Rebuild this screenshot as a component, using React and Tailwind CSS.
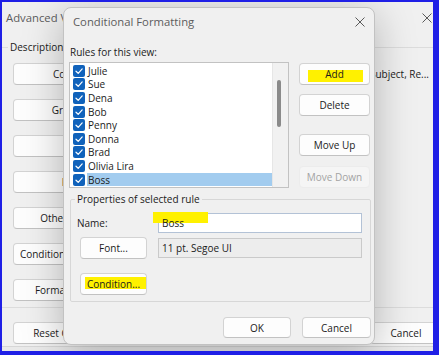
import React from 'react';

const rules = ['Julie', 'Sue', 'Dena', 'Bob', 'Penny', 'Donna', 'Brad', 'Olivia Lira', 'Boss'];

// only the first description reaches past the dialog; the others sit under it
const viewRows = [
  { label: 'Columns...', desc: 'From, Subject, Re...' },
  { label: 'Group By...' },
  { label: 'Sort...' },
  { label: 'Filter...' },
  { label: 'Other Settings...' },
  { label: 'Conditional Formatting...' },
  { label: 'Format Columns...' },
];

function CloseIcon() {
  return (
    <svg width="10" height="10" viewBox="0 0 10 10" className="shrink-0">
      <path d="M0.5 0.5 L9.5 9.5 M9.5 0.5 L0.5 9.5" stroke="#5a5a5a" strokeWidth="1" fill="none" />
    </svg>
  );
}

function Btn({ children, className = '', disabled }) {
  return (
    <div
      className={`relative flex items-center justify-center rounded-[4px] text-[10px] leading-[14px] whitespace-nowrap overflow-hidden ${
        disabled
          ? 'bg-[#f5f5f5] text-[#a3a3a3] border border-[#ececec]'
          : 'bg-[#fdfdfd] text-[#1b1b1b] border border-[#d3d3d3] border-b-[#c2c2c2]'
      } ${className}`}
    >
      {children}
    </div>
  );
}

function Check() {
  return (
    <div className="w-[12px] h-[12px] rounded-[2px] bg-[#1062bb] flex items-center justify-center shrink-0">
      <svg width="10" height="10" viewBox="0 0 10 10">
        <path d="M2 5.2 L4.2 7.3 L8.2 2.9" stroke="white" strokeWidth="1.2" fill="none" strokeLinecap="round" strokeLinejoin="round" />
      </svg>
    </div>
  );
}

function Marker({ className }) {
  return <span className={`absolute bg-[#fff100] ${className}`} />;
}

export default function App() {
  return (
    <div className="w-[439px] h-[355px] bg-[#1f1fe6] pt-[2px] pl-[2px] pr-[6px] pb-[4px] font-['Segoe_UI','Open_Sans',sans-serif] text-[#1b1b1b]">
      <div className="relative w-[431px] h-[349px] overflow-hidden bg-[#e9e9e9]">
        {/* window behind */}
        <div className="h-[345px] bg-[#f0f0f0] border-b border-[#d6d6d6] flex flex-col">
          <div className="flex justify-between items-start h-[38px] pt-[9px] pl-[4px] pr-[1px]">
            <span className="text-[11.3px] leading-[14px] text-[#5c5c5c]">Advanced View Settings: Compact</span>
            <div className="mt-[2px]"><CloseIcon /></div>
          </div>
          <fieldset className="min-w-0 border-t border-b border-[#dcdcdc]">
            <legend className="ml-[6px] px-[2px] text-[10px] leading-[14px]">Description</legend>
            <div className="flex flex-col gap-[14px] pt-[9px] pb-[6px]">
              {viewRows.map((r) => (
                <div key={r.label} className="flex items-center h-[22px]">
                  <Btn className="ml-[11px] w-[129px] h-[22px] shrink-0">{r.label}</Btn>
                  {r.desc && (
                    <div className="flex-1 min-w-0 ml-[9px] mr-[4px] whitespace-nowrap text-[10px] leading-[14px] flex justify-end">
                      <span>{r.desc}</span>
                    </div>
                  )}
                </div>
              ))}
            </div>
          </fieldset>
          <div className="flex items-center h-[22px] mt-[14px]">
            <Btn className="ml-[11px] w-[129px] h-[22px]">Reset Current View</Btn>
            <Btn className="ml-auto -mr-[9px] w-[72px] h-[22px]">Cancel</Btn>
          </div>
        </div>

        {/* Conditional Formatting dialog */}
        <div className="absolute left-[61px] top-[5px] w-[312px] h-[338px] rounded-[8px] border border-[#c2c2c2] bg-[#f0f0f0] shadow-[0_8px_40px_rgba(0,0,0,0.26)] flex flex-col">
          <div className="flex items-center justify-between h-[28px] pl-[9px] pr-[9px]">
            <span className="text-[11.3px] leading-[14px] text-[#5c5c5c]">Conditional Formatting</span>
            <CloseIcon />
          </div>
          <div className="flex flex-col pl-[5px] pr-[3px] text-[10px] leading-[14px]">
            <div className="pl-[1px] mt-[9px]">Rules for this view:</div>
            <div className="flex mt-[3px]">
              <div className="w-[220px] h-[126px] border border-[#c2c2c2] bg-white flex">
                <div className="flex-1 pt-[1px] pl-[3px]">
                  {rules.map((name) => (
                    <div key={name} className="h-[13.6px] flex items-center">
                      <Check />
                      <span className={`flex-1 h-full ml-[2px] pl-[1px] flex items-center ${name === 'Boss' ? 'bg-[#a2ccef]' : ''}`}>
                        {name}
                      </span>
                    </div>
                  ))}
                </div>
                <div className="w-[16px] bg-[#f1f1f1] border-l border-[#e6e6e6] pt-[17px] pl-[4px]">
                  <div className="w-[4px] h-[47px] rounded-full bg-[#8a8a8a]" />
                </div>
              </div>
              <div className="ml-[10px] w-[71px] flex flex-col">
                <Btn className="mt-[1px] h-[22px]">
                  <Marker className="left-[8px] top-[6px] w-[55px] h-[12px]" />
                  <span className="relative">Add</span>
                </Btn>
                <Btn className="mt-[9px] h-[22px]">Delete</Btn>
                <Btn className="mt-[18px] h-[22px]">Move Up</Btn>
                <Btn disabled className="mt-[10px] h-[22px]">Move Down</Btn>
              </div>
            </div>

            <fieldset className="min-w-0 ml-[1px] mt-[4px] w-[301px] border border-[#d7d7d7] rounded-[2px]">
              <legend className="ml-[4px] px-[2px] leading-[14px]">Properties of selected rule</legend>
              <div className="flex flex-col pt-[7px] pb-[6px]">
                <div className="flex items-center h-[20px]">
                  <span className="w-[87px] pl-[6px]">Name:</span>
                  <div className="relative w-[204px] h-[20px] bg-white border border-[#b3c2d6] flex items-center pl-[3px]">
                    <Marker className="-left-[6px] -top-[2px] w-[55px] h-[11px]" />
                    <span className="relative">Boss</span>
                  </div>
                </div>
                <div className="flex items-center h-[22px] mt-[4px]">
                  <Btn className="ml-[9px] w-[67px] h-[22px]">Font...</Btn>
                  <div className="ml-[11px] w-[204px] h-[20px] bg-[#ededed] border border-[#cacaca] flex items-center pl-[3px]">
                    11 pt. Segoe UI
                  </div>
                </div>
                <div className="flex items-center h-[22px] mt-[14px]">
                  <Btn className="ml-[9px] w-[67px] h-[22px]">
                    <Marker className="left-[4px] top-[3px] w-[63px] h-[12px]" />
                    <span className="relative">Condition...</span>
                  </Btn>
                </div>
              </div>
            </fieldset>

            <div className="flex justify-end gap-[11px] mt-[15px]">
              <Btn className="w-[68px] h-[21px]">OK</Btn>
              <Btn className="w-[69px] h-[21px]">Cancel</Btn>
            </div>
          </div>
        </div>
      </div>
    </div>
  );
}
